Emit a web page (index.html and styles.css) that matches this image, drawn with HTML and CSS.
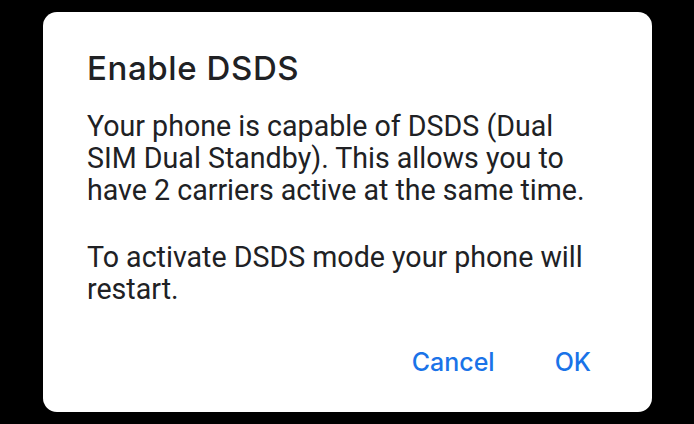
FILE: index.html
```html
<!DOCTYPE html>
<html lang="en">
<head>
  <meta charset="UTF-8">
  <title>Enable DSDS</title>
  <link rel="stylesheet" href="styles.css">
</head>
<body>
  <div class="dialog">
    <h1 class="title">Enable DSDS</h1>
    <p class="message">Your phone is capable of DSDS (Dual SIM Dual Standby). This allows you to have 2 carriers active at the same time.</p>
    <p class="message">To activate DSDS mode your phone will restart.</p>
    <div class="actions">
      <button class="action">Cancel</button>
      <button class="action">OK</button>
    </div>
  </div>
</body>
</html>
```
FILE: styles.css
```css
body {
  margin: 0;
  height: 424px;
  background: #000;
  padding: 12px 42px 0 43px;
  box-sizing: border-box;
}

.dialog {
  background: #fff;
  border-radius: 14px;
  height: 400px;
  box-sizing: border-box;
  padding: 34px 52px 0 44px;
}

.title {
  margin: 0 0 20px;
  font-family: Inter, "Open Sans", sans-serif;
  font-weight: 450;
  font-size: 33px;
  letter-spacing: 0.6px;
  line-height: 44px;
  color: #202124;
}

.message {
  margin: 0;
  font-family: Roboto, sans-serif;
  font-size: 28.6px;
  line-height: 32px;
  color: #202124;
}

.message + .message {
  margin-top: 35px;
}

.actions {
  display: flex;
  justify-content: flex-end;
  gap: 60px;
  margin: 41px 9px 0 0;
}

.action {
  border: none;
  background: none;
  padding: 0;
  font-family: Inter, "Open Sans", sans-serif;
  font-weight: 500;
  font-size: 25px;
  line-height: 32px;
  color: #1a73e8;
}
```
